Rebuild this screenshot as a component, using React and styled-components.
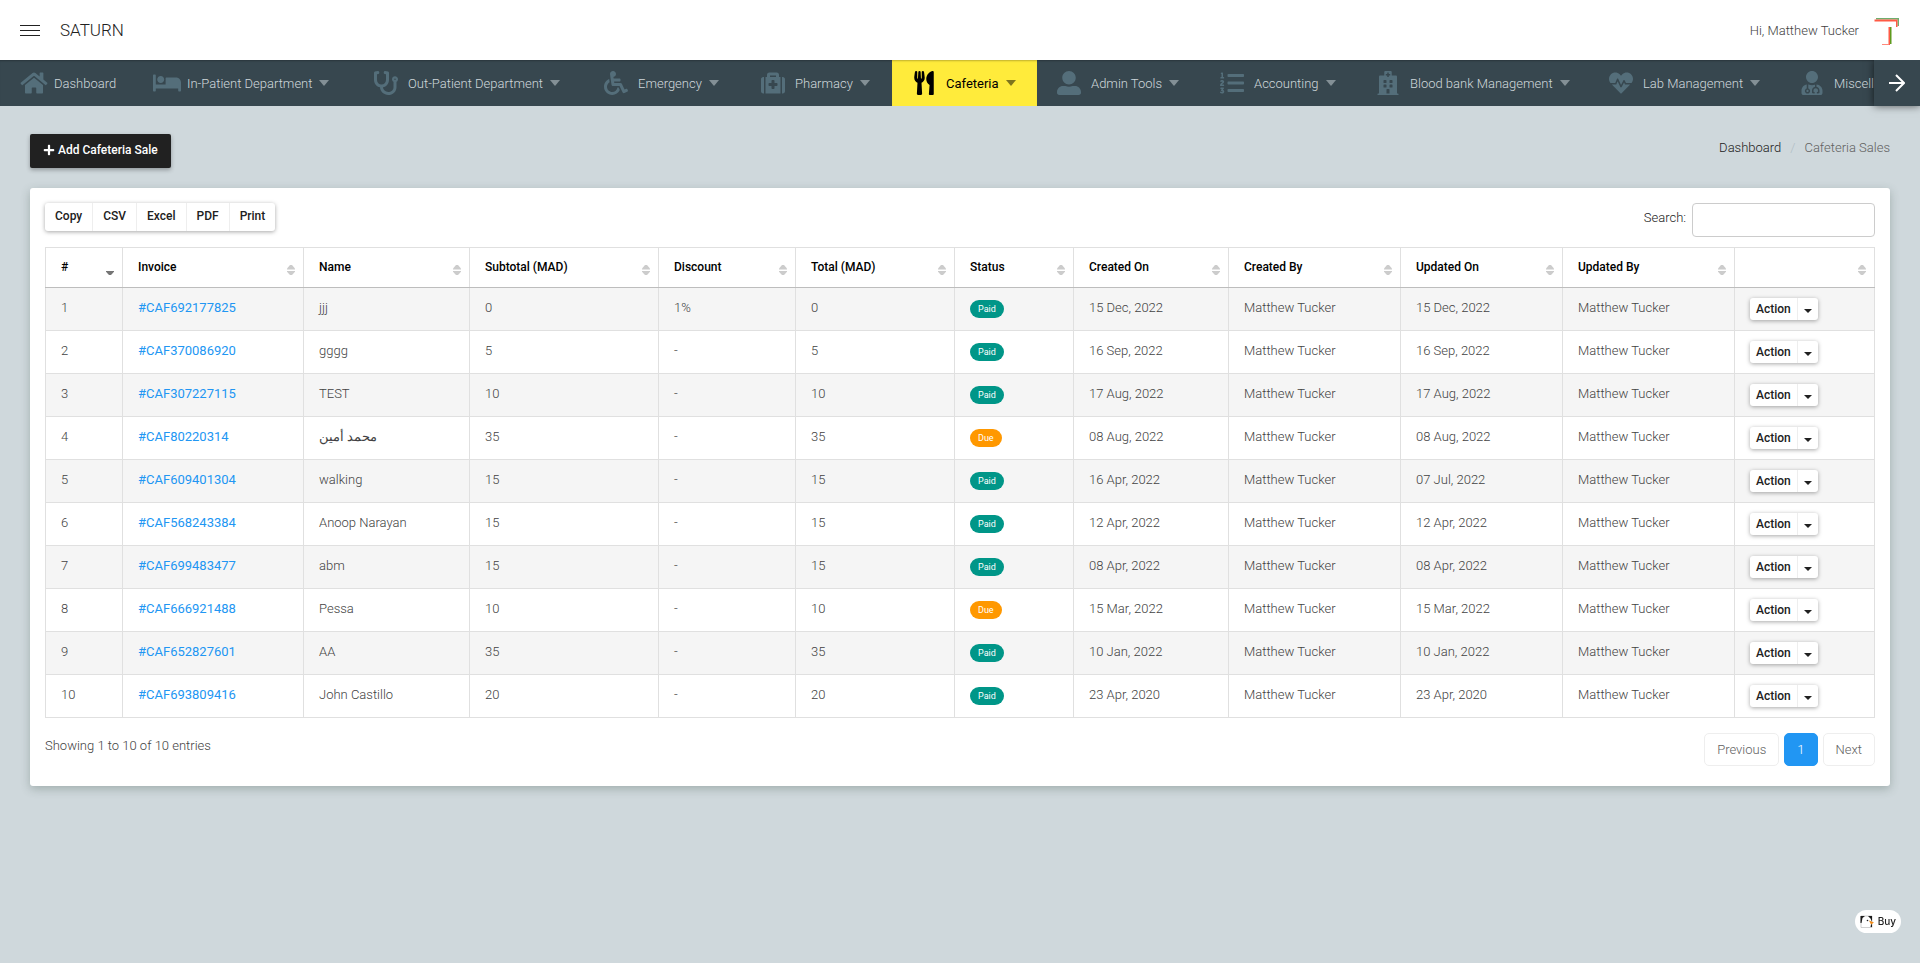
import React, { useState } from "react";
import styled, { createGlobalStyle, css } from "styled-components";
import {
  FaBed,
  FaHeartbeat,
  FaHome,
  FaHospital,
  FaListOl,
  FaMedkit,
  FaPlus,
  FaStethoscope,
  FaUserAlt,
  FaUserMd,
  FaUtensils,
  FaWheelchair,
} from "react-icons/fa";

const GlobalStyle = createGlobalStyle`
  * {
    box-sizing: border-box;
  }

  body {
    margin: 0;
    background-color: #cfd8dc;
    color: #424242;
    font-family: Roboto, "Noto Sans", sans-serif;
    font-size: 13px;
    font-weight: 300;
    line-height: 21px;
  }

  button,
  input {
    font-family: inherit;
    font-size: inherit;
    font-weight: inherit;
  }

  a {
    text-decoration: none;
  }
`;

const Page = styled.div`
  min-height: 100vh;
`;

const Header = styled.header`
  position: relative;
  z-index: 1;
  display: flex;
  align-items: center;
  height: 60px;
  padding: 0 20px;
  background-color: #fff;
`;

const MenuButton = styled.button`
  display: flex;
  flex-direction: column;
  gap: 4px;
  width: 20px;
  padding: 0;
  border: none;
  background: none;
  cursor: pointer;
`;

const MenuBar = styled.span`
  height: 1px;
  background-color: #212121;
`;

const Brand = styled.a`
  margin-left: 20px;
  color: #212121;
  font-size: 17px;
`;

const UserMenu = styled.div`
  display: flex;
  align-items: center;
  gap: 12px;
  margin-left: auto;
`;

const NavBar = styled.nav`
  display: flex;
  height: 46px;
  background-color: #37474f;
`;

const NavList = styled.ul`
  display: flex;
  flex: 1;
  min-width: 0;
  margin: 0;
  padding: 0;
  overflow: hidden;
  list-style: none;
  box-shadow: inset 0 2px 2px -1px rgba(0, 0, 0, 0.25);
`;

const NavItem = styled.li`
  flex: none;
  width: ${(props) => props.$width}px;
`;

const NavLink = styled.a`
  display: flex;
  align-items: center;
  height: 100%;
  padding-left: 20px;
  color: #cfd8dc;
  white-space: nowrap;

  ${(props) =>
    props.$active &&
    css`
      background-color: #ffeb3b;
      box-shadow: inset 0 2px 2px -1px rgba(0, 0, 0, 0.25);
      color: #000;
      font-weight: 400;
    `}
`;

const NavIcon = styled.span`
  display: flex;
  width: 34px;
  color: ${(props) => (props.$active ? "#000" : "#546e7a")};

  svg {
    width: ${(props) => (props.$wide ? 28 : 24)}px;
    height: 24px;
  }
`;

const NavCaret = styled.svg`
  width: 10px;
  height: 6px;
  margin-left: 7px;
  fill: currentColor;
  opacity: 0.5;
`;

const NavNext = styled.button`
  display: flex;
  align-items: center;
  justify-content: center;
  width: 46px;
  padding: 0;
  border: none;
  background-color: #37474f;
  box-shadow: 0 0 8px rgba(0, 0, 0, 0.6);
  color: #fff;
  cursor: pointer;
`;

const Content = styled.main`
  padding: 28px 30px;
`;

const TitleRow = styled.div`
  display: flex;
  align-items: flex-start;
  justify-content: space-between;
  margin-bottom: 20px;
`;

const AddButton = styled.button`
  display: flex;
  align-items: center;
  gap: 3px;
  height: 34px;
  padding: 0 13px 2px;
  border: none;
  border-radius: 2px;
  background-color: #212121;
  box-shadow: 0 2px 4px rgba(0, 0, 0, 0.3);
  color: #fff;
  font-size: 12px;
  font-weight: 500;
  cursor: pointer;
`;

const Breadcrumb = styled.nav`
  display: flex;
  gap: 9px;
  padding-top: 3px;
  color: #616161;

  a {
    color: #212121;
  }
`;

const Slash = styled.span`
  color: #b0bec5;
`;

const Card = styled.section`
  padding: 15px 15px 20px;
  border-radius: 3px;
  background-color: #fff;
  box-shadow: 0 3px 10px rgba(55, 80, 70, 0.3);
`;

const Toolbar = styled.div`
  display: flex;
  align-items: flex-start;
  justify-content: space-between;
  margin-bottom: 10px;
`;

const ButtonGroup = styled.div`
  display: inline-flex;
  height: ${(props) => (props.$small ? 22 : 28)}px;
  margin-top: ${(props) => (props.$small ? 1 : 0)}px;
  border-radius: 3px;
  background-color: #fff;
  box-shadow: 0 1px 4px rgba(0, 0, 0, 0.35);
  vertical-align: top;
`;

const GroupButton = styled.button`
  display: flex;
  align-items: center;
  justify-content: center;
  padding: ${(props) => (props.$small ? "0 6px" : "0 10px 2px")};
  border: none;
  background: none;
  color: #212121;
  font-size: 12px;
  font-weight: 500;
  cursor: pointer;

  & + & {
    border-left: 1px solid #eee;
  }
`;

const ToggleCaret = styled.svg`
  width: 8px;
  height: 4px;
  margin-top: 3px;
  fill: currentColor;
`;

const SearchLabel = styled.label`
  display: flex;
  gap: 6px;
  color: #212121;
  line-height: 30px;
`;

const SearchInput = styled.input`
  width: 183px;
  height: 34px;
  padding: 0 10px;
  border: 1px solid #ccc;
  border-radius: 4px;
  background-color: #fff;
`;

const Table = styled.table`
  width: 100%;
  border-collapse: collapse;
  table-layout: fixed;
`;

const HeadCell = styled.th`
  height: 40px;
  padding: 0 8px 0 15px;
  border: 1px solid #e0e0e0;
  border-bottom-color: #bdbdbd;
  color: #000;
  font-size: 12px;
  font-weight: 500;
  text-align: left;
`;

const HeadContent = styled.div`
  display: flex;
  align-items: center;
  justify-content: space-between;
  white-space: nowrap;
`;

const SortIcon = styled.svg`
  flex: none;
  width: 8px;
  height: 10px;
  margin-top: 4px;
  fill: ${(props) => (props.$sorted ? "#757575" : "#ccc")};
`;

const Row = styled.tr`
  &:nth-child(odd) {
    background-color: #f5f5f5;
  }
`;

const Cell = styled.td`
  height: 43px;
  padding: 9px 15px 0;
  border: 1px solid #e0e0e0;
  vertical-align: top;
  white-space: nowrap;

  a {
    color: #2196f3;
    font-weight: 400;
  }
`;

const Badge = styled.span`
  display: inline-block;
  height: 18px;
  margin-top: 3px;
  padding: 0 8px;
  border-radius: 9px;
  background-color: ${(props) => (props.$due ? "#ff9800" : "#009688")};
  color: #fff;
  font-size: 9px;
  font-weight: 400;
  line-height: 18px;
  vertical-align: top;
`;

const CardFooter = styled.div`
  display: flex;
  align-items: flex-start;
  justify-content: space-between;
  margin-top: 15px;
`;

const EntriesInfo = styled.p`
  margin: 2px 0;
`;

const Pagination = styled.div`
  display: flex;
  gap: 5px;
`;

const PageButton = styled.button`
  height: 33px;
  padding: 0 12px;
  border: 1px solid ${(props) => (props.$active ? "#2196f3" : "#eee")};
  border-radius: 5px;
  background-color: ${(props) => (props.$active ? "#2196f3" : "#fff")};
  color: ${(props) => (props.$active ? "#fff" : "#616161")};
`;

const BuyLink = styled.a`
  position: fixed;
  right: 19px;
  bottom: 30px;
  display: flex;
  align-items: center;
  gap: 4px;
  height: 23px;
  padding: 0 5px;
  border-radius: 12px;
  background-color: #fff;
  color: #222;
  font-family: Inter, sans-serif;
  font-size: 10px;
  font-weight: 500;
`;

const navItems = [
  { label: "Dashboard", Icon: FaHome, width: 133, wide: true, plain: true },
  { label: "In-Patient Department", Icon: FaBed, width: 221, wide: true },
  { label: "Out-Patient Department", Icon: FaStethoscope, width: 230 },
  { label: "Emergency", Icon: FaWheelchair, width: 157 },
  { label: "Pharmacy", Icon: FaMedkit, width: 151 },
  { label: "Cafeteria", Icon: FaUtensils, width: 145, active: true },
  { label: "Admin Tools", Icon: FaUserAlt, width: 163 },
  { label: "Accounting", Icon: FaListOl, width: 156 },
  { label: "Blood bank Management", Icon: FaHospital, width: 233 },
  { label: "Lab Management", Icon: FaHeartbeat, width: 191 },
  { label: "Miscellaneous", Icon: FaUserMd, width: 180 },
];

const columns = [
  { title: "#", width: 77, sorted: true },
  { title: "Invoice", width: 181 },
  { title: "Name", width: 166 },
  { title: "Subtotal (MAD)", width: 189 },
  { title: "Discount", width: 137 },
  { title: "Total (MAD)", width: 159 },
  { title: "Status", width: 119 },
  { title: "Created On", width: 155 },
  { title: "Created By", width: 172 },
  { title: "Updated On", width: 162 },
  { title: "Updated By", width: 172 },
  { title: "", width: 140 },
];

const sales = [
  ["CAF692177825", "jjj", 0, "1%", "Paid", "15 Dec, 2022", "15 Dec, 2022"],
  ["CAF370086920", "gggg", 5, "-", "Paid", "16 Sep, 2022", "16 Sep, 2022"],
  ["CAF307227115", "TEST", 10, "-", "Paid", "17 Aug, 2022", "17 Aug, 2022"],
  ["CAF80220314", "محمد أمين", 35, "-", "Due", "08 Aug, 2022", "08 Aug, 2022"],
  ["CAF609401304", "walking", 15, "-", "Paid", "16 Apr, 2022", "07 Jul, 2022"],
  ["CAF568243384", "Anoop Narayan", 15, "-", "Paid", "12 Apr, 2022", "12 Apr, 2022"],
  ["CAF699483477", "abm", 15, "-", "Paid", "08 Apr, 2022", "08 Apr, 2022"],
  ["CAF666921488", "Pessa", 10, "-", "Due", "15 Mar, 2022", "15 Mar, 2022"],
  ["CAF652827601", "AA", 35, "-", "Paid", "10 Jan, 2022", "10 Jan, 2022"],
  ["CAF693809416", "John Castillo", 20, "-", "Paid", "23 Apr, 2020", "23 Apr, 2020"],
];

const exportTypes = ["Copy", "CSV", "Excel", "PDF", "Print"];

const Avatar = () => (
  <svg width="29" height="30" viewBox="0 0 29 30" aria-hidden="true">
    <path d="M5 3H28V11H26.500V4.500H5Z" fill="#6fae6f" />
    <path d="M3.500 4.500H26.500V12H25V6.500H3.500Z" fill="#ff5a45" />
    <path d="M19 12H20.500V29H19Z" fill="#5f9a1e" />
    <path d="M17.500 12H19V30.500H17.500Z" fill="#ff5a45" />
    <path d="M11 29H18V30H11Z" fill="#ff8a7c" />
  </svg>
);

const Duck = () => (
  <svg width="14" height="14" viewBox="0 0 14 14" aria-hidden="true">
    <path d="M1 1H12V12.500H1Z" fill="#fff" stroke="#bbb" strokeWidth="0.700" />
    <path d="M0.500 1H5L2.500 3L1.500 8H0.500ZM8 1H12V7L10.500 3.500ZM11 9.500L12 9V12H10.500Z" fill="#1b1b1b" />
    <circle cx="7.500" cy="5.500" r="0.800" fill="#222" />
    <path d="M9 5.500L14 7.500L11 9.500Z" fill="#f28c18" />
  </svg>
);

const Sort = ({ sorted }) => (
  <SortIcon $sorted={sorted} viewBox="0 0 8 10" aria-hidden="true">
    {!sorted && <path d="M0 4.500V3.500L3 0H5L8 3.500V4.500Z" />}
    <path d="M0 6H8V6.800L5 10H3L0 6.800Z" />
  </SortIcon>
);

const App = () => {
  const [search, setSearch] = useState("");

  const keyword = search.toLowerCase();
  const rows = sales
    .map((sale, i) => [i + 1, ...sale])
    .filter((sale) => sale.join(" ").toLowerCase().includes(keyword));

  return (
    <Page>
      <GlobalStyle />
      <Header>
        <MenuButton aria-label="Toggle menu">
          <MenuBar />
          <MenuBar />
          <MenuBar />
        </MenuButton>
        <Brand href="#">SATURN</Brand>
        <UserMenu>
          Hi, Matthew Tucker
          <Avatar />
        </UserMenu>
      </Header>
      <NavBar>
        <NavList>
          {navItems.map(({ label, Icon, width, wide, plain, active }) => (
            <NavItem key={label} $width={width}>
              <NavLink href="#" $active={active}>
                <NavIcon $active={active} $wide={wide}>
                  <Icon />
                </NavIcon>
                {label}
                {!plain && (
                  <NavCaret viewBox="0 0 10 6">
                    <path d="M0 0H10L5 6Z" />
                  </NavCaret>
                )}
              </NavLink>
            </NavItem>
          ))}
        </NavList>
        <NavNext aria-label="Next">
          <svg width="16" height="18" viewBox="0 0 16 18" fill="none" stroke="currentColor" strokeWidth="2">
            <path d="M0 9H14M7 1L15 9L7 17" />
          </svg>
        </NavNext>
      </NavBar>
      <Content>
        <TitleRow>
          <AddButton>
            <FaPlus />
            Add Cafeteria Sale
          </AddButton>
          <Breadcrumb>
            <a href="#">Dashboard</a>
            <Slash>/</Slash>
            <span>Cafeteria Sales</span>
          </Breadcrumb>
        </TitleRow>
        <Card>
          <Toolbar>
            <ButtonGroup>
              {exportTypes.map((type) => (
                <GroupButton key={type}>{type}</GroupButton>
              ))}
            </ButtonGroup>
            <SearchLabel>
              Search:
              <SearchInput
                type="search"
                value={search}
                onChange={(e) => setSearch(e.target.value)}
              />
            </SearchLabel>
          </Toolbar>
          <Table>
            <colgroup>
              {columns.map((col) => (
                <col key={col.title} width={col.width} />
              ))}
            </colgroup>
            <thead>
              <tr>
                {columns.map((col) => (
                  <HeadCell key={col.title}>
                    <HeadContent>
                      <span>{col.title}</span>
                      <Sort sorted={col.sorted} />
                    </HeadContent>
                  </HeadCell>
                ))}
              </tr>
            </thead>
            <tbody>
              {rows.map(([id, invoice, name, total, discount, status, created, updated]) => (
                <Row key={id}>
                  <Cell>{id}</Cell>
                  <Cell>
                    <a href="#">#{invoice}</a>
                  </Cell>
                  <Cell>{name}</Cell>
                  <Cell>{total}</Cell>
                  <Cell>{discount}</Cell>
                  <Cell>{total}</Cell>
                  <Cell>
                    <Badge $due={status === "Due"}>{status}</Badge>
                  </Cell>
                  <Cell>{created}</Cell>
                  <Cell>Matthew Tucker</Cell>
                  <Cell>{updated}</Cell>
                  <Cell>Matthew Tucker</Cell>
                  <Cell>
                    <ButtonGroup $small>
                      <GroupButton $small>Action</GroupButton>
                      <GroupButton $small aria-label="Toggle actions">
                        <ToggleCaret viewBox="0 0 8 4">
                          <path d="M0 0H8L4 4Z" />
                        </ToggleCaret>
                      </GroupButton>
                    </ButtonGroup>
                  </Cell>
                </Row>
              ))}
            </tbody>
          </Table>
          <CardFooter>
            <EntriesInfo>Showing 1 to 10 of 10 entries</EntriesInfo>
            <Pagination>
              <PageButton>Previous</PageButton>
              <PageButton $active>1</PageButton>
              <PageButton>Next</PageButton>
            </Pagination>
          </CardFooter>
        </Card>
      </Content>
      <BuyLink href="#">
        <Duck />
        Buy
      </BuyLink>
    </Page>
  );
};

export default App;
